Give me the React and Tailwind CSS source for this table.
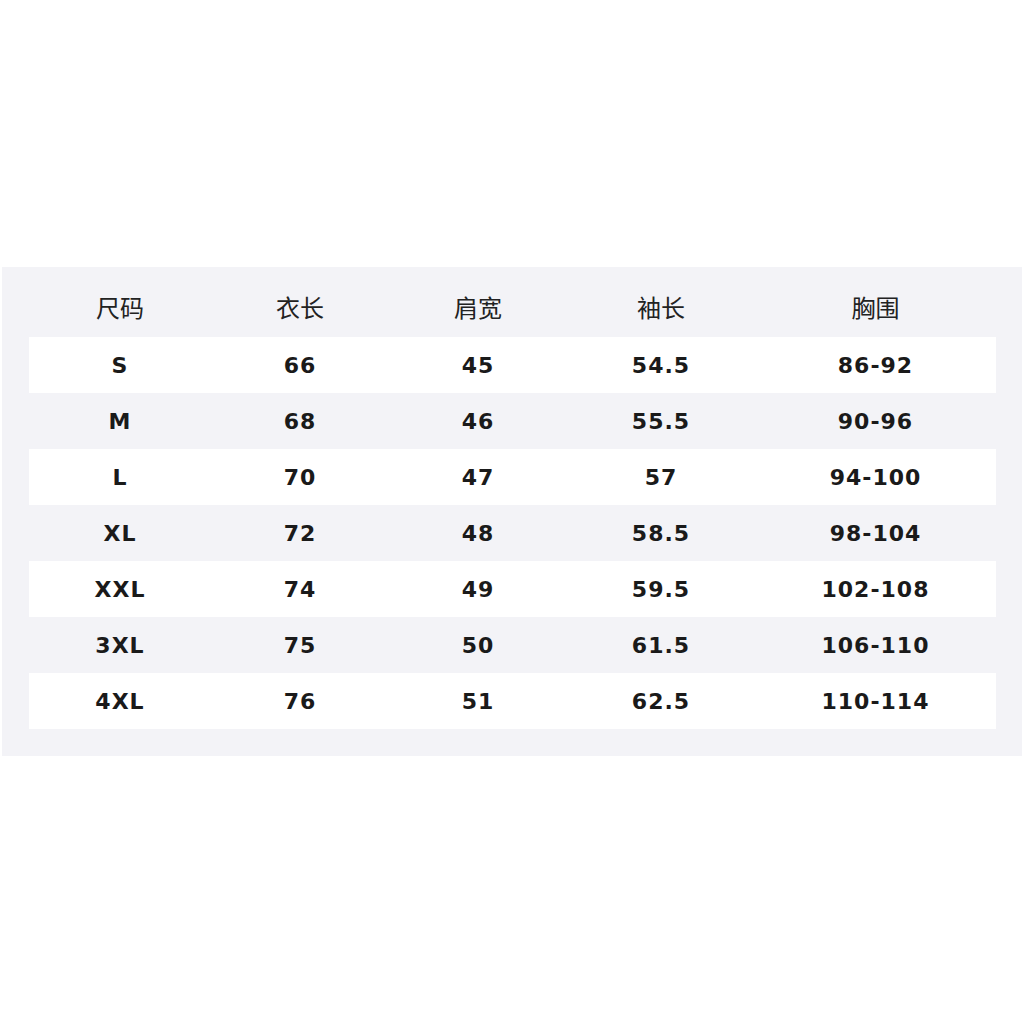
import React from "react";

const headers = ["尺码", "衣长", "肩宽", "袖长", "胸围"];

const rows = [
  ["S", "66", "45", "54.5", "86-92"],
  ["M", "68", "46", "55.5", "90-96"],
  ["L", "70", "47", "57", "94-100"],
  ["XL", "72", "48", "58.5", "98-104"],
  ["XXL", "74", "49", "59.5", "102-108"],
  ["3XL", "75", "50", "61.5", "106-110"],
  ["4XL", "76", "51", "62.5", "110-114"],
];

const cols = "grid grid-cols-[182px_178px_178px_188px_241px]";

export default function App() {
  return (
    <div className="w-[1024px] h-[1024px] bg-white pt-[267px]">
      <div className="mx-[2px] w-[1020px] bg-[#f3f3f7] pl-[27px] pr-[26px] pb-[27px]">
        <div className={`${cols} h-[70px] pt-[28px]`}>
          {headers.map((h) => (
            <div
              key={h}
              className="text-center text-[24px] leading-6 text-[#222] font-['Noto_Sans_CJK_SC',sans-serif]"
            >
              {h}
            </div>
          ))}
        </div>
        {rows.map((row, i) => (
          <div
            key={row[0]}
            className={`${cols} h-14 items-center ${i % 2 === 0 ? "bg-white" : ""}`}
          >
            {row.map((cell, j) => (
              <div
                key={j}
                className="text-center text-[22px] font-bold tracking-[1px] text-[#1a1a1a] font-['DejaVu_Sans',sans-serif]"
              >
                {cell}
              </div>
            ))}
          </div>
        ))}
      </div>
    </div>
  );
}
